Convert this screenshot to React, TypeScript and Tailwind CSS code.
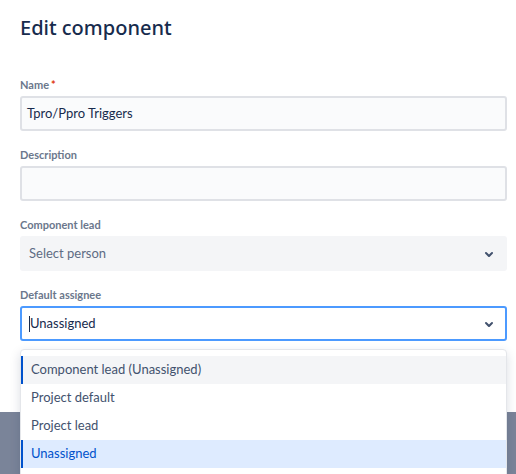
import { useState } from "react";

const options = [
    { label: "Component lead (Unassigned)", state: "focused" },
    { label: "Project default", state: "" },
    { label: "Project lead", state: "" },
    { label: "Unassigned", state: "selected" },
];

const Chevron = () => (
    <svg width="24" height="24" viewBox="0 0 24 24" className="text-[#42526e]">
        <path
            d="M8.292 10.293a1.009 1.009 0 0 0 0 1.419l2.939 2.965c.218.215.5.322.779.322s.556-.107.769-.322l2.93-2.955a1.01 1.01 0 0 0 0-1.419.987.987 0 0 0-1.406 0l-2.298 2.317-2.307-2.327a.99.99 0 0 0-1.406 0z"
            fill="currentColor"
        />
    </svg>
);

const Label = ({ text, required }: { text: string; required?: boolean }) => (
    <div className="text-[11px] font-bold text-[#6b778c] leading-4 mb-[3px]">
        {text}
        {required && <span className="text-[#de350b] pl-[2px]">*</span>}
    </div>
);

export default function App() {
    const [value] = useState("Tpro/Ppro Triggers");

    return (
        <div className="relative h-[474px] w-[516px] overflow-hidden bg-[#7a8499] font-['Lato',sans-serif]">
            <div className="h-[412px] bg-white pl-5 pr-[9px] pt-[12px]">
                <h1 className="font-['Noto_Sans',sans-serif] text-[20px] font-medium text-[#172b4d] leading-8">Edit component</h1>

                <div className="mt-[33px]">
                    <Label text="Name" required />
                    <div className="h-[35px] rounded-[3px] border-2 border-[#dfe1e6] bg-[#fafbfc] pl-[5px] flex items-center text-[13px] text-[#172b4d]">
                        {value}
                    </div>
                </div>

                <div className="mt-[16px]">
                    <Label text="Description" />
                    <div className="h-[35px] rounded-[3px] border-2 border-[#dfe1e6] bg-[#fafbfc]" />
                </div>

                <div className="mt-[16px]">
                    <Label text="Component lead" />
                    <div className="h-[35px] rounded-[3px] bg-[#f4f5f7] pl-[9px] pr-[6px] flex items-center justify-between text-[13px] text-[#5e6c84]">
                        <span>Select person</span>
                        <Chevron />
                    </div>
                </div>

                <div className="mt-[16px] relative">
                    <Label text="Default assignee" />
                    <div className="h-[35px] rounded-[3px] border-2 border-[#4c9aff] bg-white pl-[7px] pr-[4px] flex items-center justify-between text-[13px] text-[#172b4d]">
                        <span className="flex items-center">
                            <span className="inline-block w-px h-[16px] bg-[#172b4d]" />
                            <span>Unassigned</span>
                        </span>
                        <Chevron />
                    </div>

                    <div className="absolute left-0 right-0 top-full mt-[8px] rounded-t-[4px] bg-white border border-[#e4e6ea] shadow-[0_4px_11px_rgba(9,30,66,0.15)] pt-[6px] pb-[6px]">
                        {options.map((o) => (
                            <div
                                key={o.label}
                                className={
                                    "h-[28px] flex items-center pl-[8px] text-[13px] border-l-2 " +
                                    (o.state === "focused"
                                        ? "bg-[#f4f5f7] border-[#0052cc] text-[#42526e]"
                                        : o.state === "selected"
                                            ? "bg-[#deebff] border-[#0052cc] text-[#0052cc]"
                                            : "border-transparent text-[#42526e]")
                                }
                            >
                                {o.label}
                            </div>
                        ))}
                    </div>
                </div>
            </div>
        </div>
    );
}
